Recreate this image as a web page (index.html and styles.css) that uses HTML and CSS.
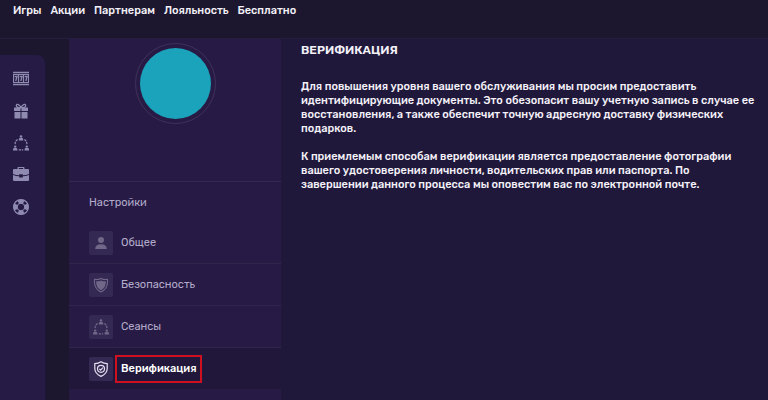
FILE: index.html
```html
<!DOCTYPE html>
<html lang="ru">

<head>
    <meta charset="UTF-8">
    <meta name="viewport" content="width=device-width, initial-scale=1.0">
    <title>Верификация</title>
    <link rel="stylesheet" href="styles.css">
</head>

<body>
    <svg class="sprite" aria-hidden="true">
        <symbol id="network" viewBox="0 0 16 16">
            <g fill="currentColor">
                <circle cx="8" cy="1.5" r="1.3" />
                <path d="M5.8 5.6V4.4q0-1.3 1.3-1.3h1.8q1.3 0 1.3 1.3v1.2z" />
                <circle cx="2.2" cy="11.6" r="1.2" />
                <path d="M0 15.4v-1q0-1.3 1.3-1.3h1.8q1.3 0 1.3 1.3v1z" />
                <circle cx="13.8" cy="11.6" r="1.2" />
                <path d="M11.6 15.4v-1q0-1.3 1.3-1.3h1.8q1.3 0 1.3 1.3v1z" />
            </g>
            <path d="M4.6 4.4Q2.2 6 2 9.4M11.4 4.4Q13.8 6 14 9.4M5.8 14.8h4.4" fill="none" stroke="currentColor" stroke-width="1.2" stroke-dasharray="2.4 .8" />
        </symbol>
    </svg>

    <header class="header">
        <nav class="top-nav">
            <a href="#">Игры</a>
            <a href="#">Акции</a>
            <a href="#">Партнерам</a>
            <a href="#">Лояльность</a>
            <a href="#">Бесплатно</a>
        </nav>
    </header>

    <div class="page">
        <nav class="rail">
            <a href="#" aria-label="Игры">
                <svg viewBox="0 0 16 16" fill="none" stroke="currentColor">
                    <path d="M0 1.5h16M0 13.5h16" stroke-width="1.6" />
                    <path d="M.5 3.5h15v8H.5zM5.5 3.5v8M10.5 3.5v8" stroke-width="1.2" />
                    <path d="M1.6 5.5h2.4l-1.3 4.5M6.7 5.5h2.4l-1.3 4.5M11.7 5.5h2.4l-1.3 4.5" stroke-width="1.3" />
                </svg>
            </a>
            <a href="#" aria-label="Акции">
                <svg viewBox="0 0 16 16">
                    <path d="M1 4.5h6.5V8H1zM8.5 4.5H15V8H8.5zM1.5 9h6v6.5h-6zM8.5 9h6v6.5h-6z" fill="currentColor" />
                    <path d="M8 4.8C7 1.5 3.5.2 3.3 2.6 3.2 4.3 5.6 4.7 8 4.8c2.4-.1 4.8-.5 4.7-2.2C12.5.2 9 1.5 8 4.8" fill="none" stroke="currentColor" stroke-width="1.3" />
                </svg>
            </a>
            <a href="#" aria-label="Партнерам">
                <svg><use href="#network" /></svg>
            </a>
            <a href="#" aria-label="Лояльность">
                <svg viewBox="0 0 16 16">
                    <path d="M5.2 2.8V1q0-.6.6-.6h4.4q.6 0 .6.6v1.8" fill="none" stroke="currentColor" stroke-width="1.3" />
                    <path d="M1 2h14q1 0 1 1v4q-3 1.2-6.2 1.3v-1H6.2v1Q3 8.2 0 7V3q0-1 1-1zM0 7.9q3 1.3 6.2 1.4v1.2h3.6V9.300q3.200-.1 6.200-1.400V13q0 1-1 1H1q-1 0-1-1z" fill="currentColor" />
                </svg>
            </a>
            <a href="#" aria-label="Помощь">
                <svg viewBox="0 0 16 16" fill="none" stroke="currentColor">
                    <circle cx="8" cy="8" r="7.4" stroke-width="1.2" />
                    <circle cx="8" cy="8" r="3.8" />
                    <circle cx="8" cy="8" r="5.5" stroke-width="4" pathLength="8" stroke-dasharray="1.3 .7" stroke-dashoffset=".65" />
                </svg>
            </a>
        </nav>

        <aside class="sidebar">
            <div class="profile">
                <div class="avatar"></div>
            </div>
            <h2 class="menu-title">Настройки</h2>
            <ul class="menu">
                <li>
                    <a href="#" class="menu-link">
                        <span class="menu-icon">
                            <svg viewBox="0 0 16 16" fill="currentColor">
                                <circle cx="8" cy="5" r="3" />
                                <path d="M2.2 14q0-4.8 5.8-4.8t5.8 4.8z" />
                            </svg>
                        </span>
                        <span class="menu-text">Общее</span>
                    </a>
                </li>
                <li>
                    <a href="#" class="menu-link">
                        <span class="menu-icon">
                            <svg viewBox="0 0 16 16">
                                <path d="M1.6 2.4Q5 3 8 1.4q3 1.6 6.4 1Q15.6 11 8 15 .4 11 1.6 2.4z" fill="none" stroke="currentColor" stroke-width="1.1" />
                                <path d="M3.2 4.2Q6 4.6 8 3.4q2 1.2 4.8.8Q13.3 10.3 8 13.2 2.7 10.3 3.2 4.2z" fill="currentColor" />
                            </svg>
                        </span>
                        <span class="menu-text">Безопасность</span>
                    </a>
                </li>
                <li>
                    <a href="#" class="menu-link">
                        <span class="menu-icon">
                            <svg><use href="#network" /></svg>
                        </span>
                        <span class="menu-text">Сеансы</span>
                    </a>
                </li>
                <li>
                    <a href="#" class="menu-link active" aria-current="page">
                        <span class="menu-icon">
                            <svg viewBox="0 0 16 16" fill="none" stroke="currentColor" stroke-width="1.2">
                                <path d="M8 .8q2.6 1.8 6.2 1.9v4.7q0 5-6.2 8-6.2-3-6.2-8V2.7Q5.4 2.6 8 .8z" />
                                <circle cx="8" cy="7.8" r="3.5" />
                                <path d="M6.3 7.9l1.3 1.2 2.3-2.5" />
                            </svg>
                        </span>
                        <span class="menu-text">Верификация</span>
                    </a>
                </li>
            </ul>
        </aside>

        <main class="content">
            <h1>ВЕРИФИКАЦИЯ</h1>
            <p>Для повышения уровня вашего обслуживания мы просим предоставить идентифицирующие документы. Это обезопасит вашу учетную запись в случае ее восстановления, а также обеспечит точную адресную доставку физических подарков.</p>
            <p>К приемлемым способам верификации является предоставление фотографии вашего удостоверения личности, водительских прав или паспорта. По завершении данного процесса мы оповестим вас по электронной почте.</p>
        </main>
    </div>
</body>

</html>
```

FILE: styles.css
```css
* {
    box-sizing: border-box;
}

body {
    margin: 0;
    min-height: 100vh;
    display: flex;
    flex-direction: column;
    background-color: #1c172e;
    color: #f3f0f8;
    font-family: Rubik, Roboto, sans-serif;
    font-size: 11px;
    font-weight: 500;
    line-height: 14px;
}

a {
    color: inherit;
    text-decoration: none;
}

.sprite {
    display: none;
}

.header {
    height: 39px;
    padding: 4px 13px;
    border-bottom: 1px solid #261e3c;
}

.top-nav {
    display: flex;
    gap: 9px;
}

.page {
    flex: 1;
    display: flex;
}

.rail {
    width: 45px;
    margin-top: 16px;
    margin-right: 24px;
    padding: 16px 0 0 13px;
    display: flex;
    flex-direction: column;
    gap: 16px;
    background-color: #261b45;
    border-top-right-radius: 8px;
    color: #8f8bb0;
}

.rail a,
.rail svg {
    display: block;
    width: 16px;
    height: 16px;
}

.sidebar {
    width: 212px;
    background-color: #271b46;
    color: #b3abc9;
}

.profile {
    height: 143px;
    padding-top: 4px;
    border-bottom: 1px solid #33284f;
}

.avatar {
    width: 81px;
    height: 81px;
    margin: 0 auto;
    padding: 4px;
    border: 1px solid #3f3159;
    border-radius: 50%;
    background-color: #1aa3ba;
    background-clip: content-box;
}

.menu-title {
    margin: 0;
    padding: 14px 20px 11px;
    font-size: 11px;
    font-weight: 400;
}

.menu {
    margin: 0;
    padding: 0;
    list-style: none;
}

.menu li {
    border-top: 1px solid #30264b;
}

.menu li:first-child {
    border-color: transparent;
}

.menu-link {
    height: 41px;
    padding-left: 20px;
    display: flex;
    align-items: center;
    gap: 2px;
    font-weight: 400;
}

.menu-icon {
    width: 24px;
    height: 24px;
    display: flex;
    align-items: center;
    justify-content: center;
    border-radius: 2px;
    background-color: #342953;
    color: #716788;
}

.menu-icon svg {
    width: 16px;
    height: 16px;
}

.menu-text {
    padding: 5px 4px;
    border: 2px solid transparent;
}

.active {
    background-color: #20173b;
    color: #ffffff;
    font-weight: 500;
}

.active .menu-icon {
    color: #e4dff0;
}

.active .menu-text {
    border-color: #cf1020;
}

.content {
    flex: 1;
    padding: 4px 12px 4px 20px;
    background-color: #20183b;
}

h1 {
    margin: 0 0 23px;
    font-size: 12px;
    font-weight: 600;
    line-height: 14px;
}

p {
    margin: 0 0 14px;
}
```
